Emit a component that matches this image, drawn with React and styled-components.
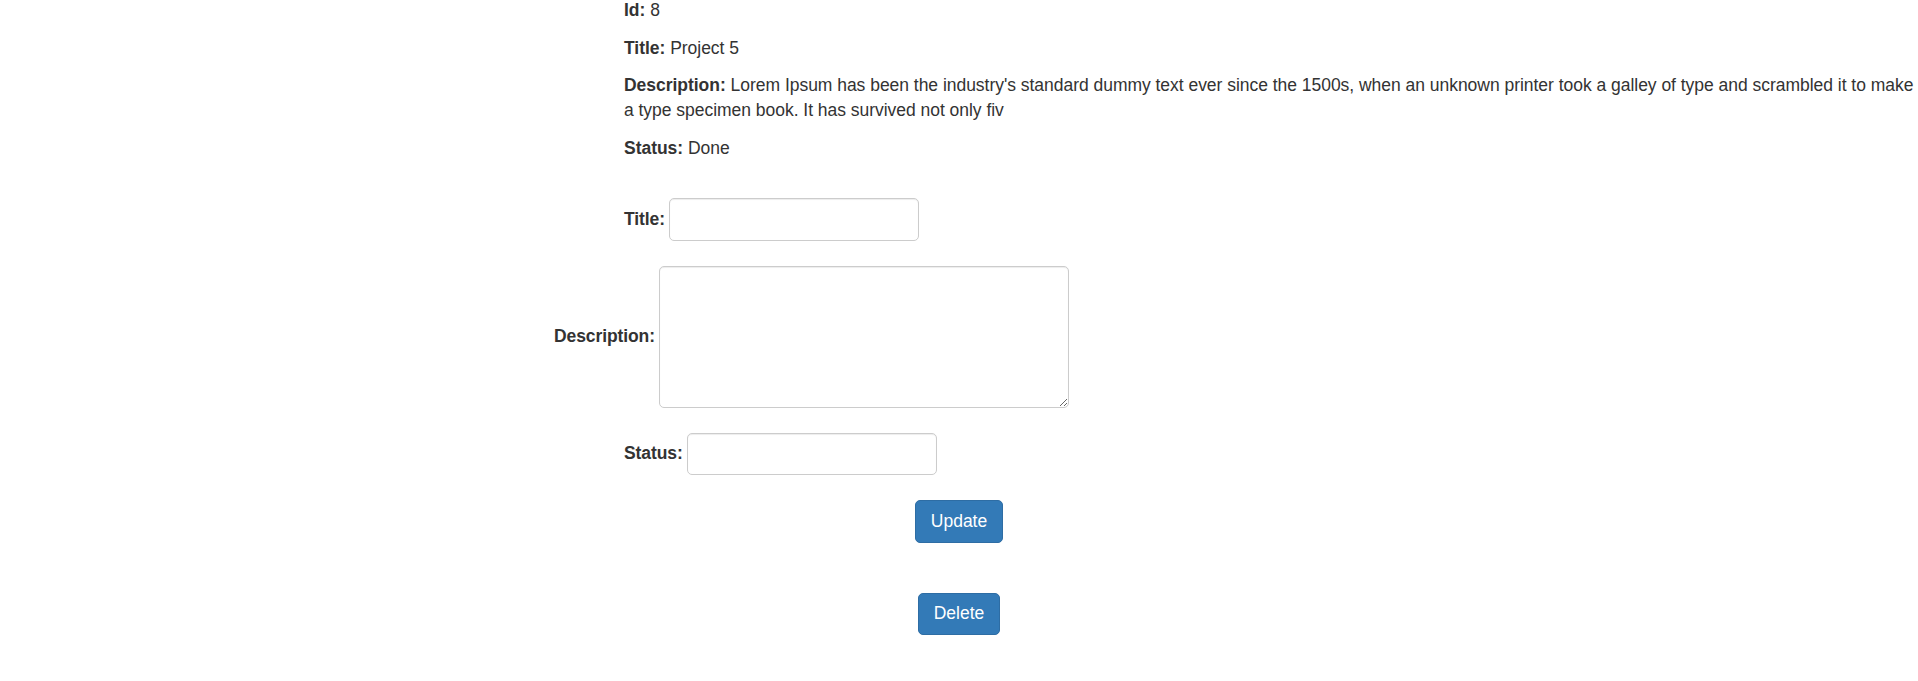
import React, { useState } from 'react'
import styled, { createGlobalStyle } from 'styled-components'

const GlobalStyle = createGlobalStyle`
  html, body {
    margin: 0;
    padding: 0;
    background: #fff;
    overflow: hidden;
  }
  body {
    font-family: "Liberation Sans", Arial, Helvetica, sans-serif;
    font-size: 17.5px;
    line-height: 25px;
    color: #333;
  }
  * { box-sizing: border-box; }
`

const Page = styled.div`
  display: flex;
  flex-direction: column;
  margin-top: -2px;
`

const Details = styled.div`
  margin-left: 624px;
  letter-spacing: -0.03px;
`

const Line = styled.p`
  margin: 0 0 12.5px;
  line-height: 25px;
`

const Form = styled.form`
  display: flex;
  flex-direction: column;
  gap: 25px;
  margin-top: 25px;
`

const Row = styled.div`
  display: flex;
  align-items: center;
  gap: 4px;
  margin-left: ${p => p.$offset}px;
`

const Label = styled.label`
  font-weight: bold;
  white-space: nowrap;
  letter-spacing: -0.1px;
`

const Input = styled.input`
  width: 250px;
  height: 42.5px;
  padding: 7.5px 15px;
  font: inherit;
  color: #555;
  background: #fff;
  border: 1px solid #ccc;
  border-radius: 5px;
  box-shadow: inset 0 1px 1px rgba(0,0,0,0.075);
  &:focus { outline: none; border-color: #66afe9; }
`

const TextArea = styled.textarea`
  width: 410px;
  height: 142px;
  padding: 7.5px 15px;
  font: inherit;
  color: #555;
  border: 1px solid #ccc;
  border-radius: 5px;
  box-shadow: inset 0 1px 1px rgba(0,0,0,0.075);
  &:focus { outline: none; border-color: #66afe9; }
`

const ButtonRow = styled.div`
  display: flex;
  justify-content: center;
  margin-top: ${p => p.$extra || 0}px;
`

const Button = styled.button`
  height: 42.5px;
  padding: 7.5px 15px;
  font: inherit;
  line-height: 25px;
  color: #fff;
  background-color: #337ab7;
  border: 1px solid #2e6da4;
  border-radius: 5px;
  cursor: pointer;
  &:hover { background-color: #286090; }
`

const project = {
  id: 8,
  title: 'Project 5',
  description: "Lorem Ipsum has been the industry's standard dummy text ever since the 1500s, when an unknown printer took a galley of type and scrambled it to make a type specimen book. It has survived not only fiv",
  status: 'Done'
}

function App() {
  const [title, setTitle] = useState('')
  const [description, setDescription] = useState('')
  const [status, setStatus] = useState('')

  return (
    <>
      <GlobalStyle />
      <Page>
        <Details>
          <Line><b>Id:</b> {project.id}</Line>
          <Line><b>Title:</b> {project.title}</Line>
          <Line><b>Description:</b> {project.description}</Line>
          <Line><b>Status:</b> {project.status}</Line>
        </Details>
        <Form onSubmit={(e) => e.preventDefault()}>
          <Row $offset={624}>
            <Label>Title:</Label>
            <Input value={title} onChange={(e) => setTitle(e.target.value)} />
          </Row>
          <Row $offset={554}>
            <Label>Description:</Label>
            <TextArea value={description} onChange={(e) => setDescription(e.target.value)} />
          </Row>
          <Row $offset={624}>
            <Label>Status:</Label>
            <Input value={status} onChange={(e) => setStatus(e.target.value)} />
          </Row>
          <ButtonRow>
            <Button type="submit">Update</Button>
          </ButtonRow>
          <ButtonRow $extra={25}>
            <Button type="button">Delete</Button>
          </ButtonRow>
        </Form>
      </Page>
    </>
  )
}

export default App
